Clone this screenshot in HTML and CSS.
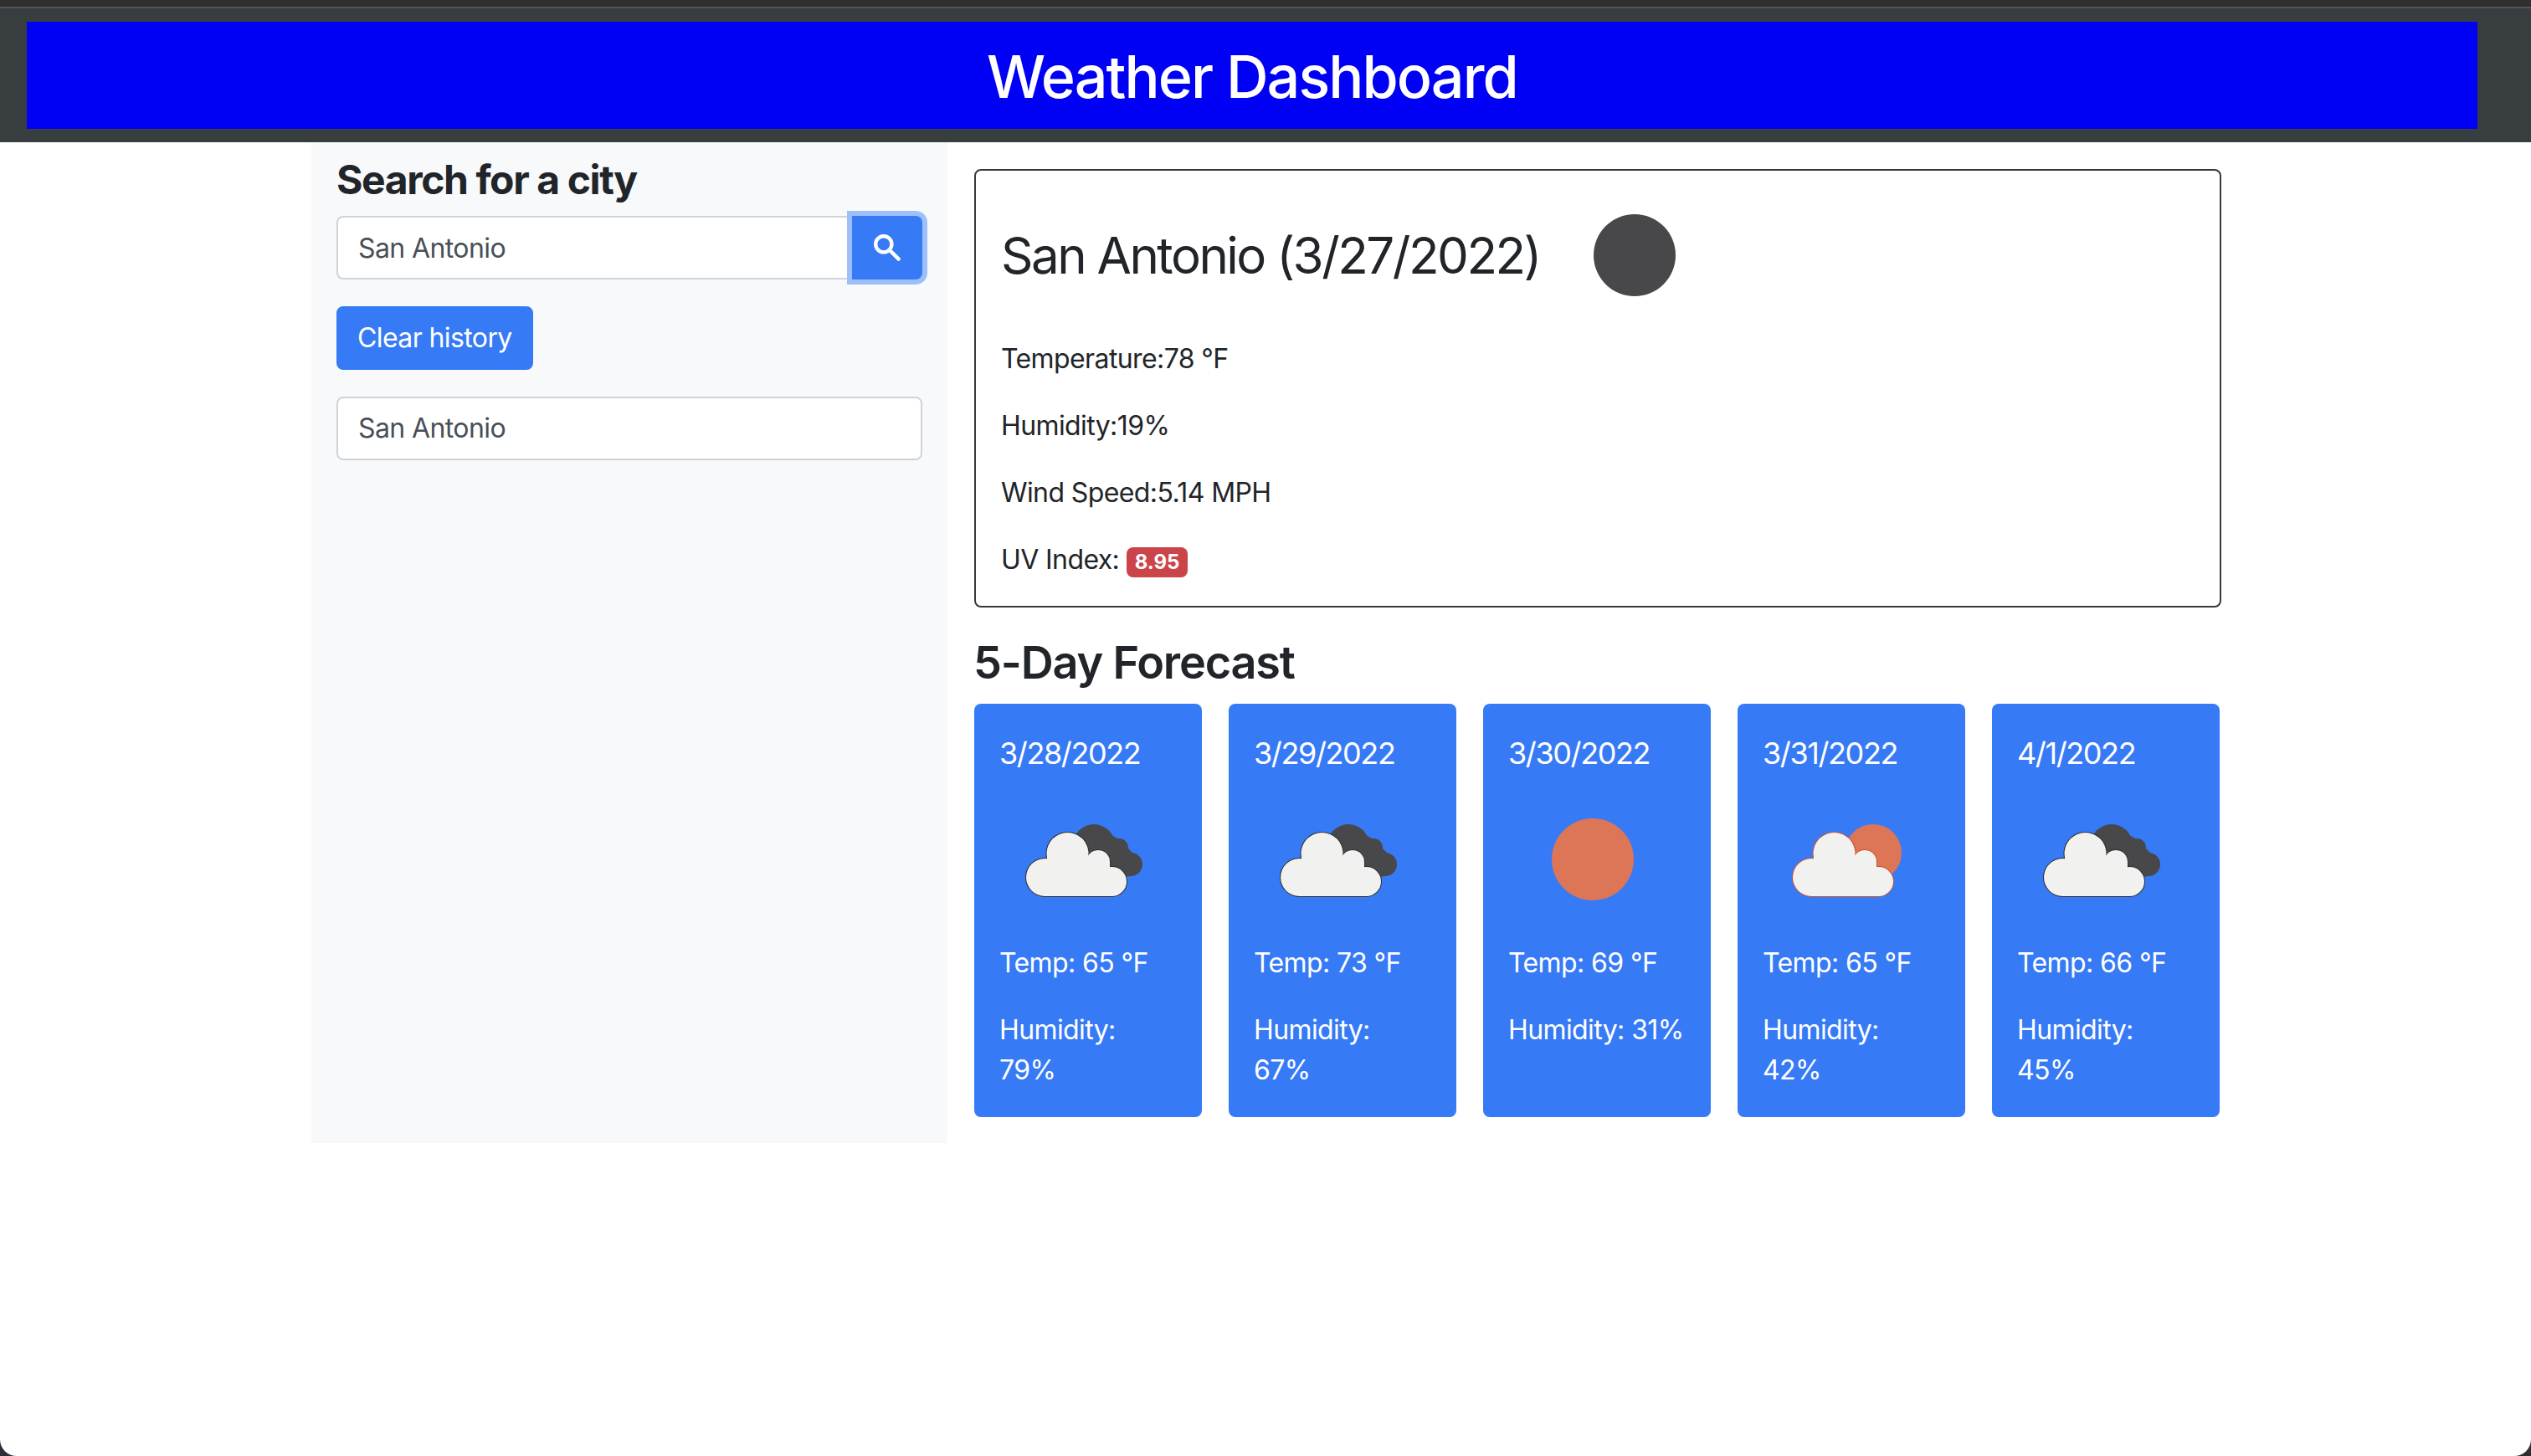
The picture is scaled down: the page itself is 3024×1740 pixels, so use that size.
FILE: index.html
```html
<!DOCTYPE html>
<html lang="en">
  <head>
    <meta charset="UTF-8" />
    <title>Weather Dashboard</title>
    <link rel="stylesheet" href="styles.css">
  </head>
  <body>
    <svg class="icon-defs" width="0" height="0">
      <defs>
        <g id="cloud-front">
          <circle cx="83.5" cy="93" r="25" />
          <circle cx="56.5" cy="121.5" r="22.5" />
          <circle cx="120" cy="103" r="14" />
          <circle cx="136.5" cy="126.5" r="17.5" />
          <rect x="59" y="93" width="49" height="51" />
          <rect x="56" y="110" width="81" height="34" />
          <rect x="106" y="103" width="28" height="20" />
        </g>
        <g id="icon-clouds">
          <g fill="#48484a">
            <circle cx="111" cy="83" r="25" />
            <circle cx="141" cy="86" r="11" />
            <circle cx="155" cy="106" r="14" />
            <polygon points="112,60 141,76 158,93 155,120 120,125 100,90" />
          </g>
          <use href="#cloud-front" transform="translate(-4 0)" fill="#2f2f31" stroke="#2f2f31" stroke-width="2" />
          <use href="#cloud-front" transform="translate(-4 0)" fill="#f1f1f0" />
        </g>
        <g id="icon-sun-cloud">
          <circle cx="130" cy="92" r="34" fill="#dc7657" />
          <use href="#cloud-front" fill="#c9532f" stroke="#c9532f" stroke-width="2" />
          <use href="#cloud-front" fill="#f1f1f0" />
        </g>
      </defs>
    </svg>

    <div class="titlebar"></div>
    <header class="site-header">
      <h1>Weather Dashboard</h1>
    </header>

    <div class="container">
      <aside class="sidebar">
        <h2 class="search-title">Search for a city</h2>
        <form class="search-group">
          <input class="search-input" type="text" value="San Antonio" />
          <button class="search-btn" type="button">
            <svg viewBox="0 0 32 32" width="32" height="32" fill="none" stroke="#fff" stroke-width="4.4" stroke-linecap="round">
              <circle cx="11.8" cy="11.8" r="9.6" />
              <line x1="19" y1="19" x2="29.6" y2="29.6" />
            </svg>
          </button>
        </form>
        <button class="clear-btn" type="button">Clear history</button>
        <ul class="history">
          <li>San Antonio</li>
        </ul>
      </aside>

      <main class="content">
        <section class="today">
          <div class="today-head">
            <h2>San Antonio (3/27/2022)</h2>
            <svg viewBox="0 0 200 200" width="200" height="200">
              <circle cx="100" cy="100" r="49" fill="#48484a" />
            </svg>
          </div>
          <p>Temperature:78 °F</p>
          <p>Humidity:19%</p>
          <p>Wind Speed:5.14 MPH</p>
          <p>UV Index: <span class="badge">8.95</span></p>
        </section>

        <h3 class="forecast-title">5-Day Forecast</h3>
        <div class="forecast">
          <div class="day-card">
            <div class="day-date">3/28/2022</div>
            <svg viewBox="0 0 200 200" width="200" height="200"><use href="#icon-clouds" /></svg>
            <p>Temp: 65 °F</p>
            <p>Humidity:<br>79%</p>
          </div>
          <div class="day-card">
            <div class="day-date">3/29/2022</div>
            <svg viewBox="0 0 200 200" width="200" height="200"><use href="#icon-clouds" /></svg>
            <p>Temp: 73 °F</p>
            <p>Humidity:<br>67%</p>
          </div>
          <div class="day-card">
            <div class="day-date">3/30/2022</div>
            <svg viewBox="0 0 200 200" width="200" height="200"><circle cx="99" cy="100" r="49" fill="#dc7657" /></svg>
            <p>Temp: 69 °F</p>
            <p>Humidity: 31%</p>
          </div>
          <div class="day-card">
            <div class="day-date">3/31/2022</div>
            <svg viewBox="0 0 200 200" width="200" height="200"><use href="#icon-sun-cloud" /></svg>
            <p>Temp: 65 °F</p>
            <p>Humidity:<br>42%</p>
          </div>
          <div class="day-card">
            <div class="day-date">4/1/2022</div>
            <svg viewBox="0 0 200 200" width="200" height="200"><use href="#icon-clouds" /></svg>
            <p>Temp: 66 °F</p>
            <p>Humidity:<br>45%</p>
          </div>
        </div>
      </main>
    </div>
  </body>
</html>
```

FILE: styles.css
```css
* {
  box-sizing: border-box;
}

html {
  background: #2a3035;
}

body {
  margin: 0;
  height: 1740px;
  overflow: hidden;
  background: #fff;
  border-radius: 0 0 20px 20px;
  font-family: Inter, "Noto Sans", sans-serif;
  font-size: 32px;
  line-height: 48px;
  letter-spacing: -0.6px;
  color: #212529;
}

.icon-defs {
  display: block;
  height: 0;
}

.titlebar {
  height: 10px;
  background: #2f2f2f;
  border-bottom: 2px solid #555;
}

.site-header {
  height: 160px;
  padding: 16px 64px 16px 32px;
  background: #383d40;
}

.site-header h1 {
  margin: 0;
  height: 128px;
  background: #0000f5;
  color: #fff;
  font-size: 70px;
  font-weight: 500;
  line-height: 132px;
  letter-spacing: -1.9px;
  text-align: center;
}

.container {
  display: flex;
  width: 2280px;
  margin: 0 auto;
}

.sidebar {
  width: 760px;
  height: 1196px;
  padding: 16px 30px;
  background: #f8f9fa;
}

.search-title {
  margin: 0 0 14px;
  font-size: 48px;
  font-weight: 700;
  line-height: 58px;
  letter-spacing: -1.4px;
}

.search-group {
  display: flex;
  margin: 0 0 32px;
}

.search-input {
  flex: 1;
  min-width: 0;
  height: 76px;
  padding: 12px 24px;
  border: 2px solid #ced4da;
  border-right: none;
  border-radius: 8px 0 0 8px;
  background: #fff;
  color: #495057;
  font: inherit;
  letter-spacing: inherit;
}

.search-btn {
  display: flex;
  align-items: center;
  justify-content: center;
  width: 84px;
  height: 76px;
  padding: 0;
  border: none;
  border-radius: 0 8px 8px 0;
  background: #377af6;
  box-shadow: 0 0 0 6px #9dbffa;
}

.clear-btn {
  display: block;
  height: 76px;
  padding: 0 23px;
  border: 2px solid #377af6;
  border-radius: 8px;
  background: #377af6;
  color: #fff;
  font: inherit;
  letter-spacing: inherit;
}

.history {
  margin: 32px 0 0;
  padding: 0;
  list-style: none;
}

.history li {
  height: 76px;
  padding: 12px 24px;
  border: 2px solid #ced4da;
  border-radius: 8px;
  background: #fff;
  color: #495057;
}

.content {
  width: 1520px;
  padding: 32px 0 0 32px;
}

.today {
  height: 524px;
  margin-right: -2px;
  padding: 1px 30px 0;
  border: 2px solid #343a40;
  border-radius: 8px;
}

.today-head {
  display: flex;
  align-items: center;
  height: 200px;
}

.today-head h2 {
  margin: 0 13px 0 0;
  font-size: 60px;
  font-weight: 400;
  line-height: 72px;
  letter-spacing: -2.5px;
}

.today p {
  margin: 0 0 32px;
}

.badge {
  display: inline-block;
  padding: 0 10px;
  border-radius: 8px;
  background: #cb444a;
  color: #fff;
  font-size: 24px;
  font-weight: 700;
  line-height: 36px;
  letter-spacing: 0;
}

.forecast-title {
  margin: 32px 0 16px -1px;
  font-size: 54px;
  font-weight: 600;
  line-height: 67px;
  letter-spacing: -1.2px;
}

.forecast {
  display: flex;
  gap: 32px;
}

.day-card {
  width: 272px;
  height: 494px;
  padding: 32px 30px;
  border-radius: 8px;
  background: #377af6;
  color: #fff;
  white-space: nowrap;
}

.day-card svg {
  display: block;
  margin-left: 2px;
}

.day-date {
  font-size: 36px;
  line-height: 54px;
  letter-spacing: -1.4px;
}

.day-card p {
  margin: 0 0 32px;
}
```
